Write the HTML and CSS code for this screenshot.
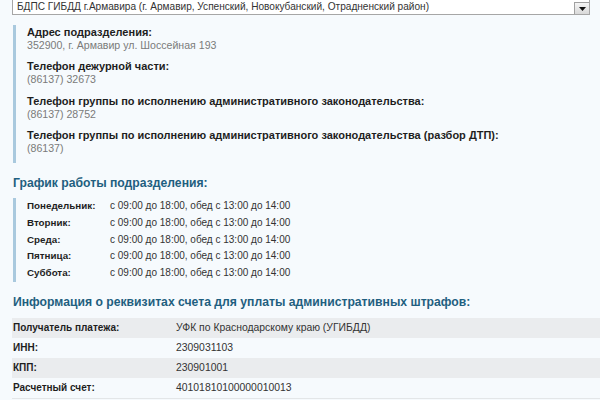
FILE: index.html
```html
<!DOCTYPE html>
<html lang="ru">
<head>
<meta charset="utf-8">
<link rel="stylesheet" href="styles.css">
</head>
<body>
<div class="page">
  <div class="select">
    <span class="select-text">БДПС ГИБДД г.Армавира (г. Армавир, Успенский, Новокубанский, Отрадненский район)</span>
    <span class="select-btn"><svg width="7" height="4" viewBox="0 0 7 4"><polygon points="0,0 7,0 3.5,4" fill="#111"/></svg></span>
  </div>

  <div class="info">
    <div class="item">
      <div class="label">Адрес подразделения:</div>
      <div class="value">352900, г. Армавир ул. Шоссейная 193</div>
    </div>
    <div class="item">
      <div class="label">Телефон дежурной части:</div>
      <div class="value">(86137) 32673</div>
    </div>
    <div class="item">
      <div class="label">Телефон группы по исполнению административного законодательства:</div>
      <div class="value">(86137) 28752</div>
    </div>
    <div class="item">
      <div class="label">Телефон группы по исполнению административного законодательства (разбор ДТП):</div>
      <div class="value">(86137)</div>
    </div>
  </div>

  <h2 class="heading">График работы подразделения:</h2>
  <div class="schedule">
    <div class="row"><span class="day">Понедельник:</span><span class="hours">с 09:00 до 18:00, обед с 13:00 до 14:00</span></div>
    <div class="row"><span class="day">Вторник:</span><span class="hours">с 09:00 до 18:00, обед с 13:00 до 14:00</span></div>
    <div class="row"><span class="day">Среда:</span><span class="hours">с 09:00 до 18:00, обед с 13:00 до 14:00</span></div>
    <div class="row"><span class="day">Пятница:</span><span class="hours">с 09:00 до 18:00, обед с 13:00 до 14:00</span></div>
    <div class="row"><span class="day">Суббота:</span><span class="hours">с 09:00 до 18:00, обед с 13:00 до 14:00</span></div>
  </div>

  <h2 class="heading">Информация о реквизитах счета для уплаты административных штрафов:</h2>
  <div class="pay">
    <div class="pay-row alt"><span class="pay-label">Получатель платежа:</span><span class="pay-value">УФК по Краснодарскому краю (УГИБДД)</span></div>
    <div class="pay-row"><span class="pay-label">ИНН:</span><span class="pay-value">2309031103</span></div>
    <div class="pay-row alt"><span class="pay-label">КПП:</span><span class="pay-value">230901001</span></div>
    <div class="pay-row last"><span class="pay-label">Расчетный счет:</span><span class="pay-value">40101810100000010013</span></div>
  </div>
</div>
</body>
</html>
```

FILE: styles.css
```css
html, body {
  margin: 0;
  padding: 0;
  background: #f6fafd;
}
body {
  font-family: "Liberation Sans", Arial, sans-serif;
  font-size: 11px;
  color: #222;
  overflow: hidden;
}
.page {
  padding-left: 12px;
  width: 600px;
  box-sizing: border-box;
}
.select {
  width: 578px;
  height: 15px;
  box-sizing: border-box;
  background: #fff;
  border: 1px solid #a6a6a6;
  border-top: none;
  display: flex;
  align-items: flex-end;
  justify-content: space-between;
  padding-left: 4px;
  padding-right: 0;
  color: #333;
}
.select-text {
  font-size: 10.1px;
  line-height: 14px;
}
.select-btn {
  width: 15px;
  height: 12px;
  box-sizing: border-box;
  border: 1px solid #a0a0a0;
  border-bottom: none;
  border-right: none;
  background: linear-gradient(#f4f4f4, #d9d9d9);
  display: flex;
  align-items: center;
  justify-content: center;
}
.info {
  margin: 10px 0 0 1px;
  border-left: 3px solid #a9c9de;
  padding: 0.5px 0 8px 11px;
}
.item {
  margin-bottom: 8.5px;
}
.item:last-child {
  margin-bottom: 0;
}
.label {
  font-weight: bold;
  line-height: 13px;
  color: #1e1e1e;
}
.value {
  font-size: 10.6px;
  color: #7a7a7a;
  line-height: 13px;
}
.heading {
  margin: 12px 0 0 1px;
  font-size: 12.2px;
  line-height: 16px;
  font-weight: bold;
  color: #1f5f80;
}
.schedule {
  margin: 7px 0 0 1px;
  border-left: 3px solid #a9c9de;
  padding: 0 0 0 11px;
}
.row {
  display: flex;
  align-items: baseline;
  line-height: 16.75px;
}
.day {
  width: 83px;
  font-size: 9.8px;
  font-weight: bold;
  color: #1e1e1e;
}
.hours {
  font-size: 10px;
  color: #333;
}
.pay {
  margin-top: 8px;
  width: 600px;
}
.pay-row {
  display: flex;
  align-items: baseline;
  height: 20px;
  line-height: 20px;
  padding-left: 1px;
}
.pay-row.alt {
  background: #eaecee;
}
.pay-row.last {
  border-bottom: 1px solid #e3e6e8;
}
.pay-label {
  width: 163px;
  font-size: 10px;
  font-weight: bold;
  color: #1e1e1e;
}
.pay-value {
  font-size: 10.4px;
  color: #333;
}
```
